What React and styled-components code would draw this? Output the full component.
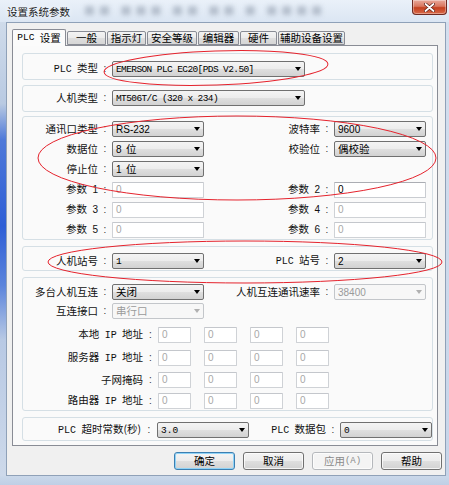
import React from "react";
import styled, { createGlobalStyle } from "styled-components";

const GlobalStyle = createGlobalStyle`
  html, body {
    margin: 0;
    padding: 0;
    background: #ffffff;
  }
  body {
    font-family: "Noto Sans CJK SC", "Liberation Sans", sans-serif;
    font-size: 10.5px;
    color: #000;
  }
`;

const Window = styled.div`
  position: relative;
  width: 449px;
  height: 485px;
  display: flex;
  flex-direction: column;
  background: linear-gradient(to bottom, #e4ecf6 0%, #d3dfee 50%, #c9d7ea 100%);
  overflow: hidden;
`;

const TitleBar = styled.div`
  height: 22px;
  display: flex;
  align-items: flex-start;
  background: linear-gradient(to bottom, #eaf1f9, #dbe6f3);
`;

const Title = styled.span`
  padding: 6px 0 0 7px;
  font-size: 10.5px;
  line-height: 11px;
  color: #1b1b1b;
  text-shadow: 0 0 6px #fff;
`;

const BlurText = styled.span`
  margin: 5px 0 0 14px;
  font-size: 11px;
  line-height: 11px;
  color: #a3aebd;
  opacity: 0.75;
  filter: blur(2.4px);
  letter-spacing: 4px;
`;

const CloseButton = styled.div`
  margin-left: auto;
  margin-right: 2px;
  width: 35px;
  height: 15px;
  box-sizing: border-box;
  border: 1px solid #6e2a22;
  border-top: none;
  border-radius: 0 0 4px 4px;
  background: linear-gradient(to bottom, #e9a99b 0%, #d9775f 45%, #c4401f 55%, #d86a4a 100%);
  box-shadow: inset 0 0 0 1px rgba(255, 255, 255, 0.35);
  display: flex;
  align-items: center;
  justify-content: center;
`;

const Body = styled.div`
  display: flex;
  height: 454px;
`;

const SideFrame = styled.div`
  width: ${(p) => p.$w}px;
  flex: none;
  background: ${(p) =>
    p.$left
      ? "linear-gradient(to bottom, #cfdbea 0%, #b9cae2 18%, #4e79d9 26%, #2e5ed6 45%, #5b84dc 58%, #b8c9e4 70%, #cdd9ea 100%)"
      : "linear-gradient(to bottom, #d4dfee, #c7d5e9)"};
`;

const Client = styled.div`
  width: 440px;
  box-sizing: border-box;
  border: 1px solid #8fa1b8;
  background: #f0f0f0;
  padding: 6px 0 0 5px;
  display: flex;
  flex-direction: column;
`;

const BottomFrame = styled.div`
  height: 9px;
  background: linear-gradient(to bottom, #cad8ea, #bfcfe5);
`;

const TabStrip = styled.div`
  display: flex;
  align-items: flex-end;
  gap: 1px;
  height: 16px;
`;

const Tab = styled.div`
  position: relative;
  z-index: ${(p) => (p.$active ? 1 : 0)};
  box-sizing: border-box;
  width: ${(p) => p.$w}px;
  height: ${(p) => (p.$active ? 17 : 14)}px;
  margin-bottom: ${(p) => (p.$active ? -1 : 0)}px;
  border: 1px solid #898c95;
  border-bottom: ${(p) => (p.$active ? "none" : "1px solid #898c95")};
  border-radius: 2px 2px 0 0;
  background: ${(p) =>
    p.$active
      ? "#fbfbfb"
      : "linear-gradient(to bottom, #f3f3f3 0%, #ebebeb 50%, #dedede 51%, #d6d6d6 100%)"};
  display: flex;
  align-items: center;
  justify-content: center;
  font-size: 10.5px;
  line-height: 1;
  word-spacing: 3px;
  white-space: pre;
`;

const Panel = styled.div`
  width: 426px;
  height: 401px;
  box-sizing: border-box;
  border: 1px solid #898c95;
  background: #fafafa;
  padding-left: 9px;
  display: flex;
  flex-direction: column;
`;

const Group = styled.div`
  box-sizing: border-box;
  width: 411px;
  margin-top: ${(p) => p.$mt}px;
  padding: ${(p) => p.$pad};
  border: 1px solid #d5dfe5;
  border-radius: 3px;
  display: flex;
  flex-direction: column;
  gap: ${(p) => p.$gap || 0}px;
`;

const Row = styled.div`
  display: grid;
  grid-template-columns: ${(p) => p.$cols};
  align-items: center;
  height: 16px;
  margin-top: ${(p) => p.$mt || 0}px;
`;

const Label = styled.span`
  text-align: right;
  white-space: pre;
  font-size: 10.5px;
  line-height: 16px;
  word-spacing: 3px;
  color: #111;
`;

const Colon = styled.span`
  text-align: center;
  font-family: "Liberation Sans", sans-serif;
  font-size: 10px;
  line-height: 16px;
  color: #333;
`;

const Mono = styled.span`
  font-family: "Liberation Mono", monospace;
  font-size: ${(p) => p.$size || 10}px;
  letter-spacing: ${(p) => p.$ls || 0}px;
  word-spacing: 0;
`;

const Sans = styled.span`
  font-family: "Liberation Sans", sans-serif;
  font-size: 10px;
`;

const Select = styled.div`
  height: 16px;
  box-sizing: border-box;
  border: 1px solid ${(p) => (p.$disabled ? "#c3c6ca" : "#707070")};
  border-radius: 2px;
  background: ${(p) =>
    p.$disabled
      ? "#f7f7f7"
      : "linear-gradient(to bottom, #f4f4f4 0%, #ececec 50%, #dfdfdf 51%, #d2d2d2 100%)"};
  color: ${(p) => (p.$disabled ? "#9a9a9a" : "#000")};
  display: flex;
  align-items: center;
  padding-left: 3px;
  font-size: 10.5px;
  line-height: 1;
  white-space: pre;
  word-spacing: 2px;
  overflow: hidden;
`;

const SelectText = styled.span`
  flex: 1;
`;

const Arrow = styled.span`
  flex: none;
  width: 0;
  height: 0;
  margin-right: 3px;
  border-left: 3.5px solid transparent;
  border-right: 3.5px solid transparent;
  border-top: 4px solid ${(p) => (p.$disabled ? "#b0b0b0" : "#000")};
`;

const Input = styled.div`
  width: ${(p) => p.$w || 92}px;
  height: 16px;
  box-sizing: border-box;
  border: 1px solid ${(p) => (p.$enabled ? "#c9ccd1" : "#cfd2d6")};
  border-top-color: ${(p) => (p.$enabled ? "#abadb3" : "#c4c7cc")};
  border-radius: 1px;
  background: #fff;
  color: ${(p) => (p.$enabled ? "#000" : "#a8a8a8")};
  font-family: "Liberation Sans", sans-serif;
  font-size: 10px;
  line-height: 14px;
  padding-left: 3px;
`;

const IpBoxes = styled.div`
  display: flex;
  gap: 13px;
`;

const ButtonRow = styled.div`
  display: flex;
  justify-content: flex-end;
  gap: 8px;
  margin-top: 6px;
  padding-right: 3px;
`;

const Button = styled.div`
  width: 61px;
  height: 18px;
  box-sizing: border-box;
  border: 1px solid ${(p) => (p.$primary ? "#3c7fb1" : p.$disabled ? "#b5b8bc" : "#707070")};
  border-radius: 3px;
  background: ${(p) =>
    p.$disabled
      ? "#f4f4f4"
      : "linear-gradient(to bottom, #f4f4f4 0%, #ececec 50%, #dfdfdf 51%, #d2d2d2 100%)"};
  box-shadow: ${(p) =>
    p.$primary ? "inset 0 0 0 1px #8fd3f7" : "inset 0 0 0 1px rgba(255,255,255,0.75)"};
  color: ${(p) => (p.$disabled ? "#8a8a8a" : "#000")};
  display: flex;
  align-items: center;
  justify-content: center;
  font-size: 10.5px;
  line-height: 1;
`;

const Overlay = styled.svg`
  position: absolute;
  left: 0;
  top: 0;
  pointer-events: none;

  ellipse {
    fill: none;
    stroke: #e5232d;
    stroke-width: 1;
  }
`;

const COLS2 = "75px 14px 92px 116px 14px 92px";
const COLS1 = "75px 14px 193px";
const COLS_LEFT = "75px 14px 92px";
const COLS_IP = "120px 15px auto";
const COLS_TIME = "118px 16px 92px 1fr 14px 92px";

const tabs = [
  { label: <><Mono $size={9.5}>PLC</Mono> 设置</>, w: 54, active: true },
  { label: "一般", w: 39 },
  { label: "指示灯", w: 39 },
  { label: "安全等级", w: 50 },
  { label: "编辑器", w: 41 },
  { label: "硬件", w: 37 },
  { label: "辅助设备设置", w: 67 },
];

const DropDown = ({ children, disabled }) => (
  <Select $disabled={disabled}>
    <SelectText>{children}</SelectText>
    <Arrow $disabled={disabled} />
  </Select>
);

const IpRow = ({ label, mt }) => (
  <Row $cols={COLS_IP} $mt={mt}>
    <Label>{label}</Label>
    <Colon>:</Colon>
    <IpBoxes>
      {[0, 1, 2, 3].map((i) => (
        <Input key={i} $w={33}>0</Input>
      ))}
    </IpBoxes>
  </Row>
);

const CloseIcon = () => (
  <svg width="11" height="9" viewBox="0 0 11 9">
    <path
      d="M1.5 1 L9.5 8 M9.5 1 L1.5 8"
      stroke="#5a1d14"
      strokeWidth="3.2"
      strokeLinecap="round"
    />
    <path
      d="M1.5 1 L9.5 8 M9.5 1 L1.5 8"
      stroke="#ffffff"
      strokeWidth="1.8"
      strokeLinecap="round"
    />
  </svg>
);

const App = () => {
  return (
    <>
      <GlobalStyle />
      <Window>
        <TitleBar>
          <Title>设置系统参数</Title>
          <BlurText>■■ ■■■ ■■ ■■ ■ ■■■■</BlurText>
          <CloseButton>
            <CloseIcon />
          </CloseButton>
        </TitleBar>

        <Body>
          <SideFrame $w={6} $left />
          <Client>
            <TabStrip>
              {tabs.map((t, i) => (
                <Tab key={i} $w={t.w} $active={t.active}>
                  {t.label}
                </Tab>
              ))}
            </TabStrip>

            <Panel>
              <Group $mt={7} $pad="6px 0 3px">
                <Row $cols={COLS1}>
                  <Label>
                    <Mono>PLC</Mono> 类型
                  </Label>
                  <Colon>:</Colon>
                  <DropDown>
                    <Mono $size={9.5} $ls={-0.6}>EMERSON PLC EC20[PDS V2.50]</Mono>
                  </DropDown>
                </Row>
              </Group>

              <Group $mt={5} $pad="4px 0 5px">
                <Row $cols={COLS1}>
                  <Label>人机类型</Label>
                  <Colon>:</Colon>
                  <DropDown>
                    <Mono $size={9.5} $ls={-0.6}>MT506T/C (320 x 234)</Mono>
                  </DropDown>
                </Row>
              </Group>

              <Group $mt={4} $pad="4px 0 2px" $gap={4}>
                <Row $cols={COLS2}>
                  <Label>通讯口类型</Label>
                  <Colon>:</Colon>
                  <DropDown>
                    <Sans>RS-232</Sans>
                  </DropDown>
                  <Label>波特率</Label>
                  <Colon>:</Colon>
                  <DropDown>
                    <Sans>9600</Sans>
                  </DropDown>
                </Row>
                <Row $cols={COLS2}>
                  <Label>数据位</Label>
                  <Colon>:</Colon>
                  <DropDown>
                    <Sans>8</Sans> 位
                  </DropDown>
                  <Label>校验位</Label>
                  <Colon>:</Colon>
                  <DropDown>偶校验</DropDown>
                </Row>
                <Row $cols={COLS_LEFT}>
                  <Label>停止位</Label>
                  <Colon>:</Colon>
                  <DropDown>
                    <Sans>1</Sans> 位
                  </DropDown>
                </Row>
                <Row $cols={COLS2}>
                  <Label>
                    参数 <Sans>1</Sans>
                  </Label>
                  <Colon>:</Colon>
                  <Input>0</Input>
                  <Label>
                    参数 <Sans>2</Sans>
                  </Label>
                  <Colon>:</Colon>
                  <Input $enabled>0</Input>
                </Row>
                <Row $cols={COLS2}>
                  <Label>
                    参数 <Sans>3</Sans>
                  </Label>
                  <Colon>:</Colon>
                  <Input>0</Input>
                  <Label>
                    参数 <Sans>4</Sans>
                  </Label>
                  <Colon>:</Colon>
                  <Input>0</Input>
                </Row>
                <Row $cols={COLS2}>
                  <Label>
                    参数 <Sans>5</Sans>
                  </Label>
                  <Colon>:</Colon>
                  <Input>0</Input>
                  <Label>
                    参数 <Sans>6</Sans>
                  </Label>
                  <Colon>:</Colon>
                  <Input>0</Input>
                </Row>
              </Group>

              <Group $mt={6} $pad="5px 0 2px">
                <Row $cols={COLS2}>
                  <Label>人机站号</Label>
                  <Colon>:</Colon>
                  <DropDown>
                    <Mono $size={9.5}>1</Mono>
                  </DropDown>
                  <Label>
                    <Mono>PLC</Mono> 站号
                  </Label>
                  <Colon>:</Colon>
                  <DropDown>
                    <Sans>2</Sans>
                  </DropDown>
                </Row>
              </Group>

              <Group $mt={6} $pad="6px 0 2px">
                <Row $cols={COLS2}>
                  <Label>多台人机互连</Label>
                  <Colon>:</Colon>
                  <DropDown>关闭</DropDown>
                  <Label>人机互连通讯速率</Label>
                  <Colon>:</Colon>
                  <DropDown disabled>
                    <Sans>38400</Sans>
                  </DropDown>
                </Row>
                <Row $cols={COLS_LEFT} $mt={3}>
                  <Label>互连接口</Label>
                  <Colon>:</Colon>
                  <DropDown disabled>串行口</DropDown>
                </Row>
                <IpRow
                  mt={7}
                  label={
                    <>
                      本地 <Mono>IP</Mono> 地址
                    </>
                  }
                />
                <IpRow
                  mt={7}
                  label={
                    <>
                      服务器 <Mono>IP</Mono> 地址
                    </>
                  }
                />
                <IpRow mt={7} label="子网掩码" />
                <IpRow
                  mt={4}
                  label={
                    <>
                      路由器 <Mono>IP</Mono> 地址
                    </>
                  }
                />
              </Group>

              <Group $mt={6} $pad="3px 0 3px">
                <Row $cols={COLS_TIME}>
                  <Label>
                    <Mono>PLC</Mono> 超时常数(秒)
                  </Label>
                  <Colon>:</Colon>
                  <DropDown>
                    <Mono $size={9.5}>3.0</Mono>
                  </DropDown>
                  <Label>
                    <Mono>PLC</Mono> 数据包
                  </Label>
                  <Colon>:</Colon>
                  <DropDown>
                    <Mono $size={9.5}>0</Mono>
                  </DropDown>
                </Row>
              </Group>
            </Panel>

            <ButtonRow>
              <Button $primary>确定</Button>
              <Button>取消</Button>
              <Button $disabled>
                应用<Mono $size={9}>(A)</Mono>
              </Button>
              <Button>帮助</Button>
            </ButtonRow>
          </Client>
          <SideFrame $w={3} />
        </Body>
        <BottomFrame />

        <Overlay width="449" height="485" viewBox="0 0 449 485">
          <ellipse cx="216" cy="68" rx="112" ry="17" transform="rotate(-2 216 68)" />
          <ellipse cx="237" cy="158" rx="199" ry="42" />
          <ellipse cx="245" cy="262" rx="197" ry="21" />
        </Overlay>
      </Window>
    </>
  );
};

export default App;
